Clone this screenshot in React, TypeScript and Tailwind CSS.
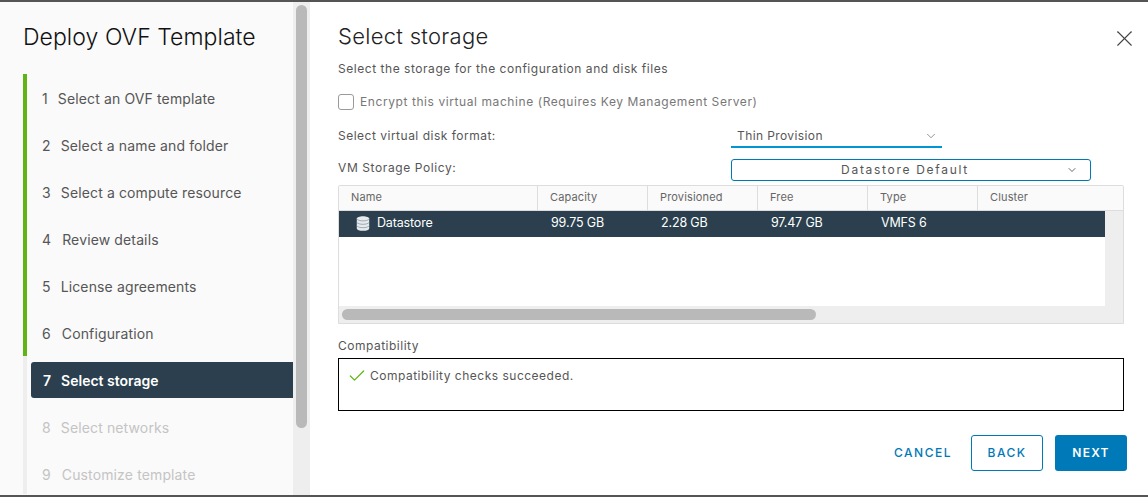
import React from 'react';
import { Check, ChevronDown, X } from 'lucide-react';

const steps = [
  { n: 1, label: 'Select an OVF template', gap: 'gap-[10px]' },
  { n: 2, label: 'Select a name and folder', gap: 'gap-[10px]' },
  { n: 3, label: 'Select a compute resource', gap: 'gap-[10px]' },
  { n: 4, label: 'Review details', gap: 'gap-[11px]' },
  { n: 5, label: 'License agreements', gap: 'gap-[10px]' },
  { n: 6, label: 'Configuration', gap: 'gap-[11px]' },
];

const columns = [
  { name: 'Name', w: 'w-[199px]' },
  { name: 'Capacity', w: 'w-[110px]' },
  { name: 'Provisioned', w: 'w-[110px]' },
  { name: 'Free', w: 'w-[110px]' },
  { name: 'Type', w: 'w-[110px]' },
  { name: 'Cluster', w: 'flex-1' },
];

const DatastoreIcon = () => (
  <svg width="14" height="16" viewBox="0 0 14 16" fill="none">
    <path d="M.8 2.6C.8 1.2 3.6.2 7 .2s6.2 1 6.2 2.4v9.8c0 1.4-2.8 2.4-6.2 2.4S.8 13.8.8 12.4Z" fill="#e6eaed" />
    <path d="M.8 3c1 1.2 3.4 1.9 6.2 1.9S12.2 4.2 13.2 3" stroke="#8d9aa4" strokeWidth="0.8" />
    <path d="M.8 6.4c1 1.2 3.4 1.9 6.2 1.9s5.2-.7 6.2-1.9" stroke="#8d9aa4" strokeWidth="0.8" />
    <path d="M.8 9.8c1 1.2 3.4 1.9 6.2 1.9s5.2-.7 6.2-1.9" stroke="#8d9aa4" strokeWidth="0.8" />
  </svg>
);

export default function App() {
  return (
    <div className="w-[1148px] h-[497px] flex flex-col overflow-hidden bg-white font-['Inter',sans-serif] text-[#565656]">
      <div className="h-[2px] bg-[#555555]" />
      <div className="flex-1 flex min-h-0">
        {/* wizard steps */}
        <aside className="w-[293px] bg-[#fafafa] overflow-hidden">
          <h1 className="pl-[23px] mt-[21px] h-[28px] leading-[28px] text-[23px] font-light tracking-[0.05px] text-[#111111] whitespace-nowrap">
            Deploy OVF Template
          </h1>
          <div className="ml-[23px] mt-[23px] border-l-4 border-[#eeeeee] h-[420px]">
            <div className="border-l-4 -ml-[4px] border-[#60b515] h-[282px] pt-[1px]">
              {steps.map((s) => (
                <div key={s.n} className={`h-[47px] flex items-center pl-[15px] text-[14px] tracking-[0.13px] ${s.gap}`}>
                  <span>{s.n}</span>
                  <span>{s.label}</span>
                </div>
              ))}
            </div>
            <div className="ml-[4px] mt-[6px] h-[36px] rounded-l-[3px] bg-[#2b3f4e] text-white font-semibold text-[14px] flex items-center gap-[10px] pl-[12px]">
              <span>7</span>
              <span>Select storage</span>
            </div>
            <div className="h-[58px] flex items-center gap-[10px] pl-[15px] text-[14px] tracking-[0.13px] text-[#c4c4c4]">
              <span>8</span>
              <span>Select networks</span>
            </div>
            <div className="h-[36px] flex items-center gap-[11px] pl-[15px] text-[14px] tracking-[0.13px] text-[#c4c4c4]">
              <span>9</span>
              <span>Customize template</span>
            </div>
          </div>
        </aside>
        <div className="w-[17px] bg-[#eeeeee] pt-[3px] px-[3px]">
          <div className="h-[423px] rounded-full bg-[#b9b9b9]" />
        </div>

        {/* main panel */}
        <main className="flex-1 min-w-0 pl-[28px] pr-[21px]">
          <div className="flex items-center justify-between h-[28px] mt-[20px]">
            <h2 className="text-[22px] font-light tracking-[0.3px] text-[#222222]">Select storage</h2>
            <X size={27} strokeWidth={1} className="text-[#444444] -mr-[11px] mt-[4px]" />
          </div>
          <p className="mt-[11px] h-[16px] leading-[16px] text-[12px] tracking-[0.54px]">
            Select the storage for the configuration and disk files
          </p>
          <label className="mt-[16px] h-[18px] flex items-center gap-[6px] text-[12px] tracking-[0.58px] text-[#777777]">
            <span className="w-[16px] h-[16px] rounded-[3px] border border-[#9a9a9a] bg-white" />
            Encrypt this virtual machine (Requires Key Management Server)
          </label>
          <div className="mt-[14px] h-[23px] flex">
            <span className="w-[393px] text-[12px] tracking-[0.5px] leading-[22px]">Select virtual disk format:</span>
            <div className="w-[211px] border-b-2 border-[#0095d3] flex items-center justify-between pl-[6px] pr-[4px] text-[12px] tracking-[0.4px]">
              Thin Provision
              <ChevronDown size={14} strokeWidth={1.2} className="text-[#666666]" />
            </div>
          </div>
          <div className="mt-[11px] h-[22px] flex">
            <span className="w-[393px] text-[12px] tracking-[0.6px] leading-[18px]">VM Storage Policy:</span>
            <div className="relative w-[360px] rounded-[3px] border border-[#0079b8] flex items-center justify-center pr-[12px] text-[12px] tracking-[1.7px]">
              Datastore Default
              <ChevronDown size={12} strokeWidth={1.6} className="absolute right-[12px] text-[#444444]" />
            </div>
          </div>

          {/* datastore table */}
          <div className="mt-[4px] mr-[3px] h-[139px] border border-[#dddddd] rounded-t-[2px] flex flex-col bg-[#eeeeee]">
            <div className="h-[25px] flex bg-[#fafafa] border-b border-[#dddddd] text-[11px] tracking-[0.15px] text-[#666666]">
              {columns.map((c, i) => (
                <div
                  key={c.name}
                  className={`${c.w} pl-[12px] leading-[22px] ${i < 5 ? 'border-r border-[#dddddd]' : ''}`}
                >
                  {c.name}
                </div>
              ))}
            </div>
            <div className="h-[95px] mr-[18px] bg-white">
              <div className="h-[26px] pb-[1px] bg-[#2b3f4e] text-white text-[12.5px] flex items-center tracking-[-0.15px]">
                <div className="w-[199px] flex items-center pl-[17px] gap-[7px]">
                  <DatastoreIcon />
                  Datastore
                </div>
                <div className="w-[110px] pl-[13px]">99.75 GB</div>
                <div className="w-[110px] pl-[13px]">2.28 GB</div>
                <div className="w-[110px] pl-[13px]">97.47 GB</div>
                <div className="w-[110px] pl-[13px]">VMFS 6</div>
              </div>
            </div>
            <div className="flex-1 pt-[3px] pl-[3px]">
              <div className="w-[474px] h-[11px] rounded-full bg-[#b9b9b9]" />
            </div>
          </div>

          <div className="mt-[14px] h-[16px] leading-[16px] text-[12px] tracking-[0.5px]">Compatibility</div>
          <div className="mt-[4px] mr-[3px] h-[53px] border border-black pl-[8px] pt-[7px] flex items-start gap-[3px] text-[12px] tracking-[0.5px]">
            <Check size={20} strokeWidth={1.5} className="text-[#60b515]" />
            <span className="mt-[2px] leading-[16px]">Compatibility checks succeeded.</span>
          </div>

          <div className="mt-[24px] flex items-center justify-end">
            <span className="mr-[19px] text-[12px] font-medium tracking-[1.5px] text-[#0079b8]">CANCEL</span>
            <button className="w-[72px] h-[36px] rounded-[3px] border border-[#0079b8] text-[12px] font-medium tracking-[1.5px] text-[#0079b8] mr-[12px]">
              BACK
            </button>
            <button className="w-[72px] h-[36px] rounded-[3px] bg-[#0079b8] text-[12px] font-semibold tracking-[1.2px] text-white">
              NEXT
            </button>
          </div>
        </main>
      </div>
      <div className="h-[2px] bg-[#555555]" />
    </div>
  );
}
